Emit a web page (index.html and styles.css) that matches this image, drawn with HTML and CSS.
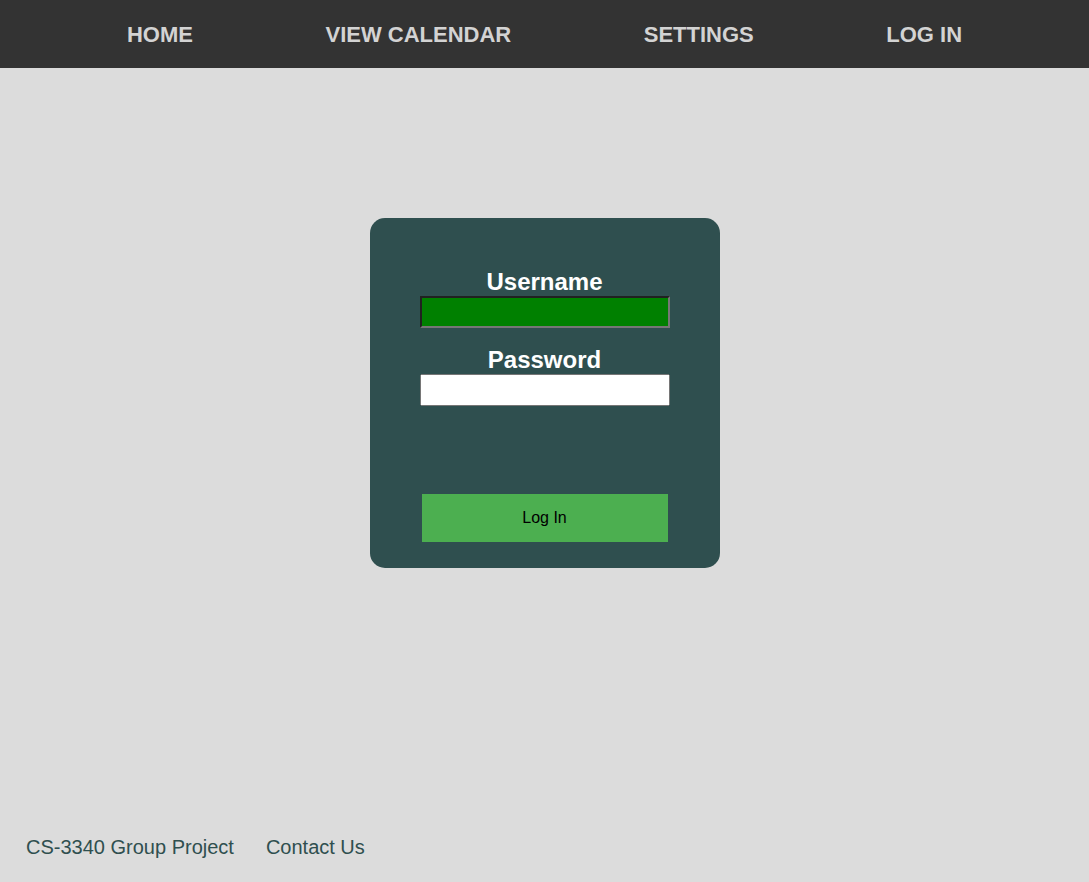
FILE: index.html
```html
<!DOCTYPE html>
<html lang="en">
<head>
<meta charset="utf-8">
<title>Log In</title>
<link rel="stylesheet" href="styles.css">
</head>
<body>
<nav class="topnav">
  <a class="navlink" href="#">HOME</a>
  <a class="navlink" href="#">VIEW CALENDAR</a>
  <a class="navlink" href="#">SETTINGS</a>
  <a class="navlink" href="#">LOG IN</a>
</nav>
<main class="main">
  <form class="card">
    <label class="field-label" for="username">Username</label>
    <input class="field field-user" id="username" type="text">
    <label class="field-label field-label-second" for="password">Password</label>
    <input class="field" id="password" type="password">
    <button class="login-btn" type="button">Log In</button>
  </form>
</main>
<footer class="footer">
  <span class="footer-item">CS-3340 Group Project</span>
  <span class="footer-item">Contact Us</span>
</footer>
</body>
</html>
```

FILE: styles.css
```css
html, body {
  margin: 0;
  padding: 0;
}
body {
  min-height: 100vh;
  display: flex;
  flex-direction: column;
  background: #dcdcdc;
  font-family: "Liberation Sans", Arial, sans-serif;
}
.topnav {
  height: 68px;
  background: #333333;
  display: flex;
  align-items: center;
  justify-content: center;
  gap: 132.5px;
}
.navlink {
  color: #d3d3d3;
  text-decoration: none;
  font-weight: bold;
  font-size: 22px;
  line-height: 25px;
}
.main {
  flex: 1;
  display: flex;
  justify-content: center;
  align-items: flex-start;
  padding-top: 150px;
}
.card {
  width: 350px;
  height: 350px;
  box-sizing: border-box;
  background: #2f4f4f;
  border-radius: 15px;
  padding-top: 50px;
  display: flex;
  flex-direction: column;
  align-items: center;
}
.field-label {
  color: #ffffff;
  font-weight: bold;
  font-size: 24px;
  line-height: 28px;
  margin-bottom: 0;
}
.field-label-second {
  margin-top: 18px;
  margin-bottom: 0;
}
.field {
  width: 250px;
  height: 32px;
  box-sizing: border-box;
  margin: 0;
  font-family: "Liberation Sans", Arial, sans-serif;
}
.field-user {
  background: #008000;
}
.login-btn {
  margin-top: 88px;
  width: 246px;
  height: 48px;
  border: none;
  background: #4caf50;
  color: #000000;
  font-family: "Liberation Sans", Arial, sans-serif;
  font-size: 16px;
  cursor: pointer;
}
.footer {
  display: flex;
  gap: 32px;
  padding: 13px 26px 23px;
}
.footer-item {
  color: #2f4f4f;
  font-size: 20px;
  line-height: 23px;
}
```
